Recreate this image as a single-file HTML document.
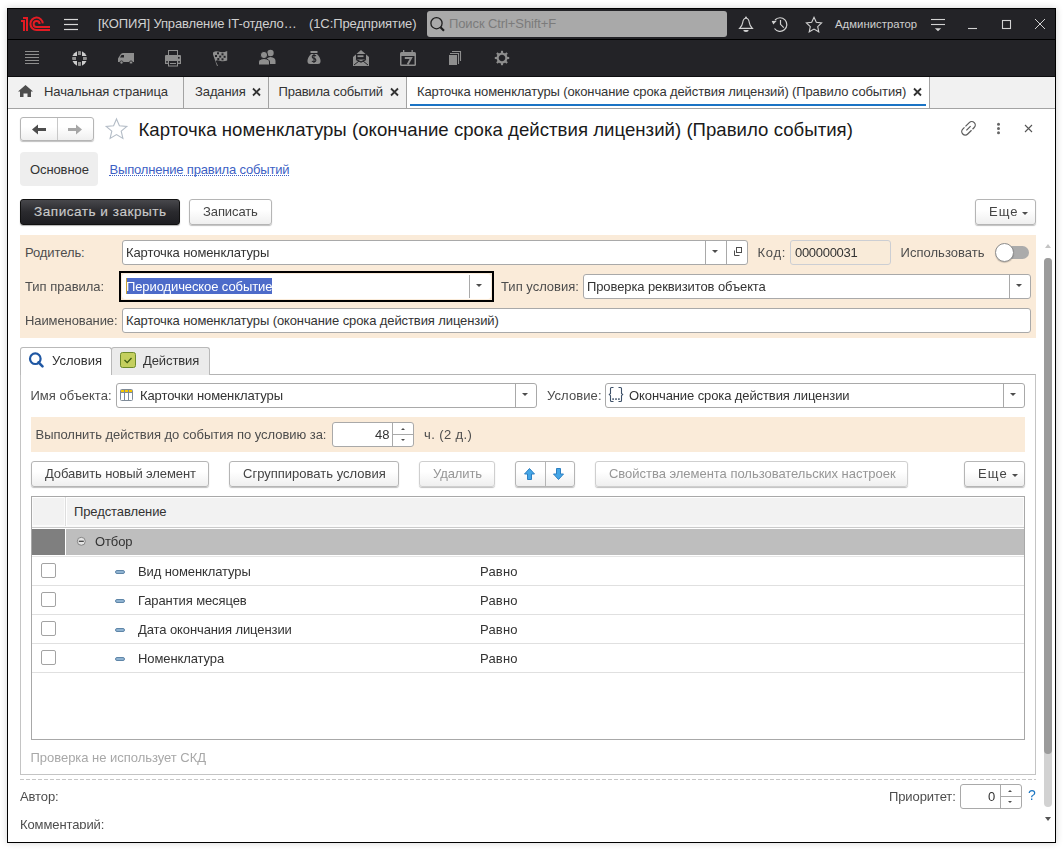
<!DOCTYPE html>
<html><head><meta charset="utf-8">
<style>
html,body{margin:0;padding:0;}
body{width:1063px;height:850px;position:relative;overflow:hidden;background:#fff;font-family:"Liberation Sans",sans-serif;font-size:13px;color:#4d4d4d;}
.a{position:absolute;}
.t{position:absolute;white-space:nowrap;line-height:15px;font-size:13px;letter-spacing:-0.1px;}
svg{position:absolute;overflow:visible;}
.btn{position:absolute;box-sizing:border-box;border:1px solid #b5b5b5;border-radius:3px;background:linear-gradient(#ffffff 40%,#efefef);box-shadow:0 1px 1px rgba(0,0,0,0.25);}
.inp{position:absolute;box-sizing:border-box;border:1px solid #a9a9a9;border-radius:3px;background:#fff;}
.vd{position:absolute;width:1px;background:#a9a9a9;}
.dd{position:absolute;width:0;height:0;border-left:4px solid transparent;border-right:4px solid transparent;border-top:4px solid #4d4d4d;}
</style></head><body>
<!-- window shadow + border -->
<div class="a" style="left:7px;top:8px;width:1049px;height:835px;box-sizing:border-box;border:1px solid #000;box-shadow:0 0 7px rgba(0,0,0,0.18);"></div>
<!-- title bar -->
<div class="a" style="left:8px;top:9px;width:1047px;height:30px;background:#232327;"></div>
<div class="a" style="left:8px;top:39px;width:1047px;height:1px;background:#000;"></div>
<div class="a" style="left:8px;top:40px;width:1047px;height:36px;background:#232327;"></div>
<!-- tab bar -->
<div class="a" style="left:8px;top:76px;width:1047px;height:1px;background:#0d0d0f;"></div>
<div class="a" style="left:8px;top:77px;width:1047px;height:31px;background:#f1f1f1;"></div>
<div class="a" style="left:8px;top:108px;width:1047px;height:1px;background:#a3a3a3;"></div>

<!-- TITLE BAR CONTENT -->
<svg style="left:0;top:0" width="60" height="40" viewBox="0 0 60 40">
 <g fill="#e31b23"><rect x="23" y="20" width="2" height="11"/><rect x="26" y="17" width="2" height="14"/><rect x="23" y="17" width="5" height="2"/><rect x="21" y="20" width="3" height="2"/></g>
 <g fill="none" stroke="#e31b23" stroke-width="2"><path d="M42.8,23.3 A6.2,6.2 0 1 0 36.5,30 L50,30"/><path d="M39.6,24 A3,3 0 1 0 36.5,27 L50,27"/></g>
</svg>
<svg style="left:0;top:0" width="90" height="40"><g stroke="#d8d8d8" stroke-width="1.2"><line x1="64" y1="19.5" x2="78" y2="19.5"/><line x1="64" y1="24.5" x2="78" y2="24.5"/><line x1="64" y1="29.5" x2="78" y2="29.5"/></g></svg>
<div class="t" style="left:98px;top:16px;color:#d0d0d0;letter-spacing:-0.13px;">[КОПИЯ] Управление IT-отдело…</div>
<div class="t" style="left:309px;top:16px;color:#d0d0d0;letter-spacing:-0.1px;">(1С:Предприятие)</div>
<div class="a" style="left:427px;top:11px;width:300px;height:26px;background:#a9a9a9;border-radius:3px;"></div>
<svg style="left:0;top:0" width="460" height="40"><circle cx="436.5" cy="23.2" r="5.6" fill="none" stroke="#1e1e1e" stroke-width="1.3"/><line x1="440.5" y1="27.3" x2="444" y2="30.8" stroke="#1e1e1e" stroke-width="2.2"/></svg>
<div class="t" style="left:449px;top:16px;color:#7b7b7b;">Поиск Ctrl+Shift+F</div>
<!-- bell -->
<svg style="left:0;top:0" width="1063" height="40"><g fill="none" stroke="#d2d2d2" stroke-width="1.1">
 <path d="M746,18.3 C743.6,18.3 743,20.2 742.7,22.6 C742.3,25.6 741,27 739.6,28.4 H752.4 C751,27 749.7,25.6 749.3,22.6 C749,20.2 748.4,18.3 746,18.3 Z"/></g>
 <circle cx="746" cy="17.4" r="1" fill="#d2d2d2"/>
 <path d="M743.3,30 h5.4 a2.7,1.9 0 0 1 -5.4,0z" fill="#d2d2d2"/>
 <!-- history -->
 <g fill="none" stroke="#d2d2d2" stroke-width="1.2"><path d="M775,20 A6.8,6.8 0 1 1 774.5,28.5"/><path d="M780.5,20 V24.3 L783.8,27.6"/></g>
 <path d="M771.7,21 L776.8,20.8 L773.3,24.6 Z" fill="#d2d2d2"/>
 <!-- star -->
 <path d="M814,17.3 L816.3,22.3 L821.6,22.9 L817.7,26.6 L818.8,31.8 L814,29.1 L809.2,31.8 L810.3,26.6 L806.4,22.9 L811.7,22.3 Z" fill="none" stroke="#d2d2d2" stroke-width="1.1" stroke-linejoin="miter"/>
 <!-- filter -->
 <g stroke="#d2d2d2" stroke-width="1.1"><line x1="931" y1="19.5" x2="945" y2="19.5"/><line x1="931" y1="24.5" x2="945" y2="24.5"/></g>
 <path d="M934.8,28.3 h6.4 l-3.2,2.9z" fill="#d2d2d2"/>
 <!-- window controls -->
 <line x1="968" y1="28.5" x2="977" y2="28.5" stroke="#d2d2d2" stroke-width="1.1"/>
 <rect x="1002.5" y="20.5" width="8" height="8" fill="none" stroke="#d2d2d2" stroke-width="1.1"/>
 <g stroke="#d2d2d2" stroke-width="1"><line x1="1035" y1="19" x2="1045" y2="29"/><line x1="1045" y1="19" x2="1035" y2="29"/></g>
</svg>
<div class="t" style="left:835px;top:17px;color:#cfcfcf;font-size:11.3px;letter-spacing:0.05px;">Администратор</div>

<!-- TOOLBAR ICONS -->
<svg style="left:0;top:40px" width="520" height="36" viewBox="0 40 520 36">
 <g fill="#8e8e8e">
  <!-- list -->
  <rect x="25" y="51" width="14" height="1"/><rect x="25" y="54" width="14" height="1"/><rect x="25" y="57" width="14" height="1"/><rect x="25" y="60" width="14" height="1"/><rect x="25" y="63" width="14" height="1"/>
 </g>
 <!-- lifebuoy -->
 <defs><clipPath id="lb"><circle cx="79.5" cy="58.5" r="7.4"/></clipPath></defs>
 <g clip-path="url(#lb)">
  <g fill="#cdcdcd"><rect x="72" y="51" width="5" height="5"/><rect x="82" y="51" width="5" height="5"/><rect x="72" y="61" width="5" height="5"/><rect x="82" y="61" width="5" height="5"/></g>
  <g fill="#8f8f8f"><rect x="78" y="51" width="3" height="4"/><rect x="78" y="62" width="3" height="4"/><rect x="72" y="57" width="4" height="3"/><rect x="83" y="57" width="4" height="3"/></g>
 </g>
 <circle cx="79.5" cy="58.5" r="3.3" fill="#232327"/>
 <!-- truck -->
 <path d="M123,53 H134 V62 H118 V58.5 L120.5,54.5 Q121.3,53 123,53 Z" fill="#8e8e8e"/>
 <path d="M120,57.5 L121.5,55 H124 V57.5Z" fill="#232327"/>
 <circle cx="121.5" cy="62.5" r="1.6" fill="#8e8e8e" stroke="#232327" stroke-width="0.8"/><circle cx="131" cy="62.5" r="1.6" fill="#8e8e8e" stroke="#232327" stroke-width="0.8"/>
 <!-- printer -->
 <rect x="168.5" y="50.5" width="9" height="5" fill="none" stroke="#8e8e8e" stroke-width="1"/>
 <path d="M166,55 H180 Q181,55 181,56 V64 H165 V56 Q165,55 166,55Z" fill="#8e8e8e"/>
 <rect x="178" y="57" width="1.6" height="1.6" fill="#232327"/>
 <rect x="166.2" y="61" width="1.6" height="1.8" fill="#232327"/><rect x="178.2" y="61" width="1.6" height="1.8" fill="#232327"/>
 <rect x="168.5" y="60.5" width="9" height="5.5" fill="#232327" stroke="#8e8e8e" stroke-width="1"/>
 <rect x="170" y="63" width="6" height="1" fill="#8e8e8e"/>
 <!-- flag -->
 <path d="M213,52.5 Q216,50.5 219.5,51.8 Q223,53 227.2,51 V60.5 Q223.5,62 220,60.8 Q217,59.8 215.6,61 L218,65.8 L217,66 L213,54.5 Z" fill="#8e8e8e"/>
 <g fill="#232327"><rect x="217" y="52.3" width="2" height="2"/><rect x="221.5" y="53.3" width="2" height="2"/><rect x="215" y="55" width="2" height="2"/><rect x="219.2" y="55.6" width="2" height="2"/><rect x="223.6" y="55.8" width="2" height="2"/><rect x="217.3" y="58" width="2" height="2"/><rect x="221.5" y="58.3" width="2" height="2"/></g>
 <!-- people -->
 <circle cx="270.5" cy="53" r="3.2" fill="#8e8e8e"/>
 <path d="M266,61 Q266,57.5 270.5,57 Q275.5,57.5 275.5,61 V64 H266Z" fill="#8e8e8e"/>
 <circle cx="264" cy="55" r="3.6" fill="#8e8e8e" stroke="#232327" stroke-width="1"/>
 <path d="M258.5,65 V62 Q258.5,59 264,58.5 Q269.5,59 269.5,62 V65Z" fill="#8e8e8e" stroke="#232327" stroke-width="1"/>
 <!-- money bag -->
 <rect x="310.5" y="51" width="7" height="2" fill="#8e8e8e"/>
 <path d="M311,54 H317 Q321,58 320.5,62 Q320.3,64 318,64 H310 Q307.7,64 307.5,62 Q307,58 311,54Z" fill="#8e8e8e"/>
 <path d="M315.9,56.2 Q315.6,55.2 314,55.2 Q312.2,55.2 312.2,56.7 Q312.2,58 314,58.4 Q315.9,58.8 315.9,60.3 Q315.9,61.8 314,61.8 Q312.3,61.8 312,60.8 M314,54 V63" fill="none" stroke="#232327" stroke-width="1.1"/>
 <!-- envelope -->
 <path d="M353,57 L361,50 L369,57 V66 H353Z" fill="#8e8e8e"/>
 <rect x="356" y="54" width="10" height="5.5" fill="#232327"/>
 <rect x="357.5" y="55.3" width="6" height="1.8" fill="#8e8e8e"/>
 <path d="M354,65 L359,61 M368,65 L363,61" stroke="#232327" stroke-width="1"/>
 <path d="M356,59.5 L361,62 L366,59.5" fill="none" stroke="#232327" stroke-width="1.2"/>
 <!-- calendar -->
 <path d="M401.5,52 H414.5 Q416,52 416,53.5 V64.5 Q416,66 414.5,66 H401.5 Q400,66 400,64.5 V53.5 Q400,52 401.5,52Z" fill="#8e8e8e"/>
 <rect x="401.5" y="56" width="13" height="8.5" fill="#232327"/>
 <rect x="403" y="50" width="1.3" height="3" fill="#8e8e8e"/><rect x="411.5" y="50" width="1.3" height="3" fill="#8e8e8e"/>
 <path d="M404.8,58 H411.2 L407.6,64.5" fill="none" stroke="#8e8e8e" stroke-width="1.9"/>
 <!-- docs -->
 <rect x="449" y="55" width="8" height="10" fill="#8e8e8e"/>
 <path d="M450,53.5 H458.5 V64" fill="none" stroke="#8e8e8e" stroke-width="1.1"/>
 <path d="M452,51.5 H460.5 V61" fill="none" stroke="#8e8e8e" stroke-width="1.1"/>
 <!-- gear -->
 <g transform="translate(502,58)"><circle r="4.4" fill="none" stroke="#8e8e8e" stroke-width="2.2"/>
 <g stroke="#8e8e8e" stroke-width="2.1"><line x1="0" y1="-7.2" x2="0" y2="-4"/><line x1="0" y1="7.2" x2="0" y2="4"/><line x1="-7.2" y1="0" x2="-4" y2="0"/><line x1="7.2" y1="0" x2="4" y2="0"/>
 <line x1="-5.1" y1="-5.1" x2="-3" y2="-3"/><line x1="5.1" y1="5.1" x2="3" y2="3"/><line x1="-5.1" y1="5.1" x2="-3" y2="3"/><line x1="5.1" y1="-5.1" x2="3" y2="-3"/></g></g>
</svg>
<!-- TAB BAR -->
<svg style="left:0;top:76px" width="60" height="32" viewBox="0 76 60 32"><path d="M25.5,85 L33,91.5 L31,91.5 V97 H27.5 V93.5 H23.5 V97 H20 V91.5 H18 Z" fill="#4d4d4d"/></svg>
<div class="t" style="left:44px;top:84px;color:#333;">Начальная страница</div>
<div class="a" style="left:183px;top:77px;width:1px;height:31px;background:#a3a3a3;"></div>
<div class="t" style="left:195px;top:84px;color:#333;">Задания</div>

<div class="a" style="left:268px;top:77px;width:1px;height:31px;background:#a3a3a3;"></div>
<div class="t" style="left:278.5px;top:84px;color:#333;letter-spacing:-0.21px;">Правила событий</div>
<div class="a" style="left:406px;top:77px;width:1px;height:31px;background:#a3a3a3;"></div>
<div class="a" style="left:407px;top:77px;width:522px;height:31px;background:#fff;"></div>
<div class="a" style="left:410px;top:104px;width:516px;height:2px;background:#1b74c5;"></div>
<div class="t" style="left:417px;top:84px;color:#333;letter-spacing:-0.12px;">Карточка номенклатуры (окончание срока действия лицензий) (Правило события)</div>
<svg style="left:0;top:76px" width="1063" height="32" viewBox="0 76 1063 32"><g stroke="#333" stroke-width="1.8"><path d="M253,88.5 L260,95.5 M260,88.5 L253,95.5"/><path d="M391,88.5 L398,95.5 M398,88.5 L391,95.5"/><path d="M914,88.5 L921,95.5 M921,88.5 L914,95.5"/></g></svg>
<div class="a" style="left:929px;top:77px;width:1px;height:31px;background:#a3a3a3;"></div>

<!-- FORM HEADER -->
<div class="btn" style="left:20px;top:117px;width:74px;height:24px;"></div>
<div class="a" style="left:57px;top:118px;width:1px;height:22px;background:#c8c8c8;"></div>
<svg style="left:0;top:110px" width="140" height="40" viewBox="0 110 140 40">
 <path d="M32,129.5 L38,124.5 V128 H46 V131 H38 V134.5 Z" fill="#4d4d4d"/>
 <path d="M82,129.5 L76,124.5 V128 H68 V131 H76 V134.5 Z" fill="#a6a6a6"/>
 <path d="M116.5,119 L119.4,125.8 L126.8,126.4 L121.2,131.2 L122.9,138.4 L116.5,134.6 L110.1,138.4 L111.8,131.2 L106.2,126.4 L113.6,125.8 Z" fill="none" stroke="#b3bcc6" stroke-width="1.1" stroke-linejoin="miter"/>
</svg>
<div class="t" style="left:138.5px;top:119px;font-size:18.6px;line-height:22px;color:#1a1a1a;letter-spacing:0.025px;">Карточка номенклатуры (окончание срока действия лицензий) (Правило события)</div>
<svg style="left:950px;top:110px" width="100" height="40" viewBox="950 110 100 40">
 <g fill="none" stroke="#5c5c5c" stroke-width="1.25" transform="translate(968.5,128.3) rotate(-45)">
  <path d="M-0.8,-3.5 H4.6 A3.5,3.5 0 0 1 4.6,3.5 H2.2"/>
  <path d="M0.8,3.5 H-4.6 A3.5,3.5 0 0 1 -4.6,-3.5 H-2.2"/>
  <path d="M-3,0 H3"/>
 </g>
 <g fill="#666"><circle cx="998.5" cy="124.3" r="1.5"/><circle cx="998.5" cy="128.5" r="1.5"/><circle cx="998.5" cy="132.7" r="1.5"/></g>
 <g stroke="#555" stroke-width="1.1"><path d="M1025,125 L1032,132 M1032,125 L1025,132"/></g>
</svg>
<div class="a" style="left:20px;top:152px;width:78px;height:34px;background:#eeeeee;border-radius:4px;"></div>
<div class="t" style="left:30px;top:162px;color:#333;">Основное</div>
<div class="t" style="left:109.5px;top:162px;color:#3d5fc4;letter-spacing:-0.18px;">Выполнение правила событий</div>
<div class="a" style="left:109px;top:175px;width:180px;height:0;border-top:1px dotted #3d5fc4;"></div>
<!-- COMMAND BAR -->
<div class="a" style="left:20px;top:199px;width:160px;height:26px;box-sizing:border-box;border:1px solid #111;border-radius:3px;background:linear-gradient(#48484c,#2a2a2e 50%,#1e1e22);box-shadow:0 1px 1px rgba(0,0,0,0.3);"></div>
<div class="t" style="left:34px;top:204px;color:#cacaca;font-size:13.6px;letter-spacing:0.5px;-webkit-text-stroke:0.15px #cacaca;">Записать и закрыть</div>
<div class="btn" style="left:189px;top:199px;width:83px;height:26px;"></div>
<div class="t" style="left:203px;top:204px;color:#444;will-change:transform;">Записать</div>
<div class="btn" style="left:975px;top:199px;width:61px;height:26px;"></div>
<div class="t" style="left:989px;top:204px;color:#444;letter-spacing:1px;will-change:transform;">Еще</div>
<div class="dd" style="left:1022px;top:212px;border-width:3px 3px 0 3px;border-top-color:#4d4d4d;"></div>

<!-- HEADER GROUP (beige) -->
<div class="a" style="left:20px;top:235px;width:1016px;height:103px;background:#faebd9;"></div>
<div class="t" style="left:25px;top:245px;">Родитель:</div>
<div class="inp" style="left:122px;top:240px;width:626px;height:25px;"></div>
<div class="vd" style="left:705px;top:241px;height:23px;"></div>
<div class="vd" style="left:726px;top:241px;height:23px;"></div>
<div class="dd" style="left:712px;top:250px;border-width:3px 3px 0 3px;"></div>
<svg style="left:0;top:0" width="1063" height="850">
 <g fill="none" stroke="#4d4d4d" stroke-width="1"><rect x="736.5" y="247.5" width="5" height="5"/><path d="M734.5,250.5 V255.5 H739.5"/></g>
</svg>
<div class="t" style="left:126px;top:245px;color:#333;">Карточка номенклатуры</div>
<div class="t" style="left:757.5px;top:245px;letter-spacing:0.7px;">Код:</div>
<div class="a" style="left:790px;top:240px;width:101px;height:25px;box-sizing:border-box;border:1px solid #ccced3;border-radius:3px;background:#f9ebd9;"></div>
<div class="t" style="left:795px;top:245px;color:#333;letter-spacing:-0.3px;">000000031</div>
<div class="t" style="left:900.5px;top:245px;letter-spacing:0.04px;">Использовать</div>
<div class="a" style="left:998px;top:246px;width:31px;height:13px;border-radius:7px;background:#ababab;"></div>
<div class="a" style="left:995px;top:243px;width:19px;height:19px;box-sizing:border-box;border-radius:50%;background:#fff;border:1px solid #8c8c8c;box-shadow:0 1px 1px rgba(0,0,0,0.2);"></div>

<div class="t" style="left:25px;top:279px;letter-spacing:-0.02px;">Тип правила:</div>
<div class="a" style="left:119px;top:271px;width:375px;height:31px;box-sizing:border-box;border:2px solid #000;"></div>
<div class="inp" style="left:122px;top:274px;width:369px;height:25px;border-color:#fff;"></div>
<div class="vd" style="left:469px;top:275px;height:23px;"></div>
<div class="dd" style="left:476px;top:284px;border-width:3px 3px 0 3px;"></div>
<div class="a" style="left:126px;top:278px;width:146px;height:16px;background:#4d6bc9;"></div>
<div class="a" style="left:126px;top:278px;width:1px;height:16px;background:#c9a43a;"></div>
<div class="t" style="left:126px;top:279px;color:#fff;">Периодическое событие</div>
<div class="t" style="left:501px;top:279px;letter-spacing:0px;">Тип условия:</div>
<div class="inp" style="left:583px;top:274px;width:448px;height:25px;"></div>
<div class="vd" style="left:1009px;top:275px;height:23px;"></div>
<div class="dd" style="left:1016px;top:284px;border-width:3px 3px 0 3px;"></div>
<div class="t" style="left:587px;top:279px;color:#333;">Проверка реквизитов объекта</div>

<div class="t" style="left:25px;top:313px;">Наименование:</div>
<div class="inp" style="left:122px;top:308px;width:909px;height:25px;"></div>
<div class="t" style="left:126px;top:313px;color:#333;">Карточка номенклатуры (окончание срока действия лицензий)</div>

<!-- TABS -->
<div class="a" style="left:20px;top:374px;width:1016px;height:401px;box-sizing:border-box;border:1px solid #c4c4c4;border-top-color:#b4b4b4;"></div>
<div class="a" style="left:111px;top:347px;width:99px;height:28px;box-sizing:border-box;border:1px solid #b9b9b9;border-bottom:none;border-radius:3px 3px 0 0;background:#ebebeb;"></div>
<div class="a" style="left:20px;top:347px;width:92px;height:28px;box-sizing:border-box;border:1px solid #b9b9b9;border-bottom:none;border-radius:3px 3px 0 0;background:#fff;"></div>
<svg style="left:0;top:0" width="1063" height="850">
 <circle cx="35.3" cy="358.7" r="5.3" fill="none" stroke="#1f57a3" stroke-width="2.2"/>
 <line x1="38.6" y1="362.3" x2="42.5" y2="366.3" stroke="#1f57a3" stroke-width="2.6" stroke-linecap="round"/>
 <rect x="120.5" y="352.5" width="15" height="15" rx="2" fill="#c4cf5e" stroke="#6d8a2b" stroke-width="1"/>
 <path d="M124.5,360 L127.2,362.6 L131.5,358" fill="none" stroke="#3d5a10" stroke-width="1.3"/>
</svg>
<div class="t" style="left:52px;top:353px;color:#333;letter-spacing:0px;">Условия</div>
<div class="t" style="left:143px;top:353px;color:#333;">Действия</div>

<!-- CONDITIONS ROW -->
<div class="t" style="left:30.5px;top:388px;letter-spacing:0px;">Имя объекта:</div>
<div class="inp" style="left:116px;top:383px;width:421px;height:25px;"></div>
<div class="vd" style="left:515px;top:384px;height:23px;"></div>
<div class="dd" style="left:522px;top:393px;border-width:3px 3px 0 3px;"></div>

<div class="t" style="left:140px;top:388px;color:#333;">Карточки номенклатуры</div>
<div class="t" style="left:547px;top:388px;letter-spacing:0.1px;">Условие:</div>
<div class="inp" style="left:605px;top:383px;width:420px;height:25px;"></div>
<div class="vd" style="left:1003px;top:384px;height:23px;"></div>
<div class="dd" style="left:1010px;top:393px;border-width:3px 3px 0 3px;"></div>
<svg style="left:0;top:0" width="1063" height="850">
 <rect x="120.5" y="389.5" width="12" height="11" rx="1" fill="#fff" stroke="#7f8b98" stroke-width="1"/>
 <rect x="121" y="390" width="11" height="2.5" fill="#f5c700"/>
 <path d="M124.5,390 V400.5 M128.5,390 V400.5 M121,392.5 H132" stroke="#7f8b98" stroke-width="1"/>
 <g fill="none" stroke="#3d5068" stroke-width="1.1">
  <path d="M613.5,387.5 H611.5 Q610.5,387.5 610.5,388.5 V393.5 L609.3,394.6 L610.5,395.7 V400.5 Q610.5,401.5 611.5,401.5 H613.5"/>
  <path d="M618.5,387.5 H620.5 Q621.5,387.5 621.5,388.5 V393.5 L622.7,394.6 L621.5,395.7 V400.5 Q621.5,401.5 620.5,401.5 H618.5"/>
 </g>
 <g fill="#3d5068"><rect x="612.3" y="398.3" width="1.6" height="1.6"/><rect x="615.2" y="398.3" width="1.6" height="1.6"/><rect x="618.1" y="398.3" width="1.6" height="1.6"/></g>
</svg>
<div class="t" style="left:629px;top:388px;color:#333;">Окончание срока действия лицензии</div>

<!-- STRIP -->
<div class="a" style="left:31px;top:417px;width:994px;height:35px;background:#faebd9;"></div>
<div class="t" style="left:35.5px;top:427px;letter-spacing:-0.04px;">Выполнить действия до события по условию за:</div>
<div class="inp" style="left:332px;top:422px;width:82px;height:25px;"></div>
<div class="vd" style="left:392px;top:423px;height:23px;"></div>
<div class="a" style="left:393px;top:434px;width:20px;height:1px;background:#a9a9a9;"></div>
<div class="dd" style="left:401px;top:428px;border-width:0 2px 2px 2px;border-top:0;border-bottom:2px solid #4d4d4d;"></div>
<div class="dd" style="left:401px;top:439px;border-width:2px 2px 0 2px;"></div>
<div class="t" style="left:375px;top:427px;color:#333;">48</div>
<div class="t" style="left:424px;top:427px;letter-spacing:0.4px;">ч. (2 д.)</div>

<!-- BUTTONS ROW -->
<div class="btn" style="left:31px;top:461px;width:178px;height:26px;"></div>
<div class="t" style="left:45px;top:466px;color:#444;will-change:transform;">Добавить новый элемент</div>
<div class="btn" style="left:229px;top:461px;width:170px;height:26px;"></div>
<div class="t" style="left:243px;top:466px;color:#444;letter-spacing:0.01px;will-change:transform;">Сгруппировать условия</div>
<div class="btn" style="left:419px;top:461px;width:76px;height:26px;border-color:#cfcfcf;"></div>
<div class="t" style="left:433px;top:466px;color:#969696;will-change:transform;">Удалить</div>
<div class="btn" style="left:515px;top:461px;width:60px;height:26px;"></div>
<div class="a" style="left:545px;top:462px;width:1px;height:24px;background:#b5b5b5;"></div>
<svg style="left:0;top:0" width="1063" height="850">
 <path d="M529.5,468.5 L534.5,474 H531.5 V479.5 H527.5 V474 H524.5 Z" fill="#45a6e6" stroke="#2c7fc2" stroke-width="1" stroke-linejoin="round"/>
 <path d="M558.5,479.5 L553.5,474 H556.5 V468.5 H560.5 V474 H563.5 Z" fill="#45a6e6" stroke="#2c7fc2" stroke-width="1" stroke-linejoin="round"/>
</svg>
<div class="btn" style="left:595px;top:461px;width:313px;height:26px;border-color:#cfcfcf;"></div>
<div class="t" style="left:608.5px;top:466px;color:#969696;letter-spacing:-0.025px;will-change:transform;">Свойства элемента пользовательских настроек</div>
<div class="btn" style="left:964px;top:461px;width:61px;height:26px;"></div>
<div class="t" style="left:978px;top:466px;color:#444;letter-spacing:1.2px;will-change:transform;">Еще</div>
<div class="dd" style="left:1012px;top:474px;border-width:3px 3px 0 3px;"></div>

<!-- TABLE -->
<div class="a" style="left:31px;top:496px;width:994px;height:244px;box-sizing:border-box;border:1px solid #a8a8a8;background:#fff;"></div>
<div class="a" style="left:32px;top:497px;width:992px;height:29px;background:#f2f2f2;"></div>
<div class="a" style="left:32px;top:497px;width:992px;height:29px;box-sizing:border-box;border:1px solid #fbfbfb;border-top-color:#fff;"></div>
<div class="a" style="left:64px;top:497px;width:1px;height:29px;background:#fbfbfb;"></div>
<div class="a" style="left:65px;top:497px;width:1px;height:29px;background:#dedede;"></div>
<div class="a" style="left:66px;top:497px;width:1px;height:29px;background:#fff;"></div>
<div class="a" style="left:32px;top:526px;width:992px;height:1px;background:#fafafa;"></div>
<div class="a" style="left:32px;top:527px;width:992px;height:1px;background:#cbcbcb;"></div>
<div class="t" style="left:74px;top:504px;color:#333;">Представление</div>
<div class="a" style="left:32px;top:529px;width:33px;height:26px;background:#7f7f7f;"></div>
<div class="a" style="left:32px;top:556px;width:992px;height:1px;background:#e6e6e6;"></div>
<div class="a" style="left:66px;top:529px;width:958px;height:26px;background:#bebebe;"></div>
<svg style="left:0;top:0" width="1063" height="850">
 <circle cx="81.3" cy="541.3" r="4" fill="#e4e4e4" stroke="#858585" stroke-width="1"/>
 <line x1="78.8" y1="541.3" x2="83.8" y2="541.3" stroke="#444" stroke-width="1.3"/>
</svg>
<div class="t" style="left:95px;top:534px;color:#333;">Отбор</div>
<div class="a" style="left:41px;top:563px;width:15px;height:15px;box-sizing:border-box;border:1px solid #a3a3a3;border-radius:2px;background:#fff;"></div>
<div class="a" style="left:115px;top:570px;width:10px;height:4px;box-sizing:border-box;border:1px solid #5f86a8;border-radius:2px;background:#8fb3d1;"></div>
<div class="t" style="left:138px;top:564px;color:#333;">Вид номенклатуры</div>
<div class="t" style="left:480px;letter-spacing:0.2px;top:564px;color:#333;">Равно</div>
<div class="a" style="left:32px;top:585px;width:992px;height:1px;background:#e0e0e0;"></div>
<div class="a" style="left:41px;top:592px;width:15px;height:15px;box-sizing:border-box;border:1px solid #a3a3a3;border-radius:2px;background:#fff;"></div>
<div class="a" style="left:115px;top:599px;width:10px;height:4px;box-sizing:border-box;border:1px solid #5f86a8;border-radius:2px;background:#8fb3d1;"></div>
<div class="t" style="left:138px;top:593px;color:#333;">Гарантия месяцев</div>
<div class="t" style="left:480px;letter-spacing:0.2px;top:593px;color:#333;">Равно</div>
<div class="a" style="left:32px;top:614px;width:992px;height:1px;background:#e0e0e0;"></div>
<div class="a" style="left:41px;top:621px;width:15px;height:15px;box-sizing:border-box;border:1px solid #a3a3a3;border-radius:2px;background:#fff;"></div>
<div class="a" style="left:115px;top:628px;width:10px;height:4px;box-sizing:border-box;border:1px solid #5f86a8;border-radius:2px;background:#8fb3d1;"></div>
<div class="t" style="left:138px;top:622px;color:#333;">Дата окончания лицензии</div>
<div class="t" style="left:480px;letter-spacing:0.2px;top:622px;color:#333;">Равно</div>
<div class="a" style="left:32px;top:643px;width:992px;height:1px;background:#e0e0e0;"></div>
<div class="a" style="left:41px;top:650px;width:15px;height:15px;box-sizing:border-box;border:1px solid #a3a3a3;border-radius:2px;background:#fff;"></div>
<div class="a" style="left:115px;top:657px;width:10px;height:4px;box-sizing:border-box;border:1px solid #5f86a8;border-radius:2px;background:#8fb3d1;"></div>
<div class="t" style="left:138px;top:651px;color:#333;">Номенклатура</div>
<div class="t" style="left:480px;letter-spacing:0.2px;top:651px;color:#333;">Равно</div>
<div class="a" style="left:32px;top:672px;width:992px;height:1px;background:#e0e0e0;"></div>

<div class="t" style="left:30.5px;top:750px;color:#a8a8a8;letter-spacing:-0.03px;">Проверка не использует СКД</div>
<!-- FOOTER -->
<div class="a" style="left:20px;top:779px;width:1016px;height:1px;background:repeating-linear-gradient(90deg,#c6c6c6 0 4px,transparent 4px 6px);"></div>
<div class="t" style="left:20px;top:789px;">Автор:</div>
<div class="t" style="left:889px;top:789px;">Приоритет:</div>
<div class="inp" style="left:960px;top:784px;width:62px;height:25px;"></div>
<div class="vd" style="left:1000px;top:785px;height:23px;"></div>
<div class="a" style="left:1001px;top:796px;width:20px;height:1px;background:#a9a9a9;"></div>
<div class="dd" style="left:1008px;top:790px;border-width:0 2px 2px 2px;border-top:0;border-bottom:2px solid #4d4d4d;"></div>
<div class="dd" style="left:1008px;top:801px;border-width:2px 2px 0 2px;"></div>
<div class="t" style="left:988px;top:789px;color:#333;">0</div>
<div class="t" style="left:1028px;top:788px;color:#1a75c2;font-size:14px;">?</div>
<div class="a" style="left:8px;top:818px;width:200px;height:11px;overflow:hidden;"><div class="t" style="left:12px;top:-1px;">Комментарий:</div></div>
<!-- SCROLLBAR -->
<div class="a" style="left:1045px;top:244px;width:0;height:0;border-left:3px solid transparent;border-right:3px solid transparent;border-bottom:4px solid #c4c4c4;"></div>
<div class="a" style="left:1044px;top:258px;width:8px;height:549px;border-radius:4px;background:#d2d2d2;"></div>
<div class="a" style="left:1044px;top:258px;width:8px;height:496px;border-radius:4px;background:#9b9b9b;"></div>
<div class="a" style="left:1045px;top:817px;width:0;height:0;border-left:3px solid transparent;border-right:3px solid transparent;border-top:4px solid #555;"></div>
</body></html>
